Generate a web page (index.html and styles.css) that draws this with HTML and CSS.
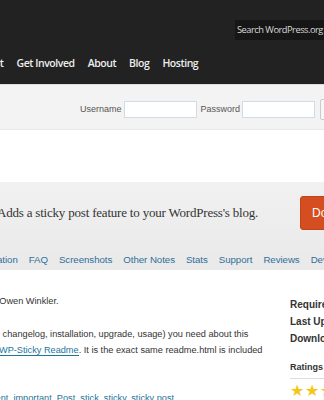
FILE: index.html
```html
<!DOCTYPE html>
<html lang="en">
<head>
    <meta charset="UTF-8">
    <meta name="viewport" content="width=device-width, initial-scale=1.0">
    <title>WP-Sticky - WordPress Plugins</title>
    <link rel="stylesheet" href="styles.css">
</head>
<body>
    <div class="header">
        <div class="search-row">
            <div class="search">Search WordPress.org</div>
        </div>
        <div class="nav-row">
            <div class="nav">
                <a href="#">Support</a>
                <a href="#">Get Involved</a>
                <a href="#">About</a>
                <a href="#">Blog</a>
                <a href="#">Hosting</a>
            </div>
            <div class="nav-button"></div>
        </div>
    </div>

    <div class="login">
        <label>Username</label>
        <input type="text" class="field">
        <label>Password</label>
        <input type="password" class="field">
        <div class="login-button"></div>
    </div>

    <div class="spacer"></div>

    <div class="plugin-head">
        <div class="tagline-row">
            <p class="tagline">Adds a sticky post feature to your WordPress's blog.</p>
            <div class="download">Download</div>
        </div>
        <div class="tabs">
            <a href="#">Installation</a>
            <a href="#">FAQ</a>
            <a href="#">Screenshots</a>
            <a href="#">Other Notes</a>
            <a href="#">Stats</a>
            <a href="#">Support</a>
            <a href="#">Reviews</a>
            <a href="#">Developers</a>
        </div>
    </div>

    <div class="main">
        <div class="content">
            <p class="line first">Based on the original Sticky plugin by Owen Winkler.</p>
            <p class="line gap">(description, changelog, installation, upgrade, usage) you need about this</p>
            <p class="line shift">plugin is in <a href="#" class="readme">WP-Sticky Readme</a>. It is the exact same readme.html is included</p>
            <p class="line tags">Tags: <a href="#">announcement</a>, <a href="#">important</a>, <a href="#">Post</a>, <a href="#">stick</a>, <a href="#">sticky</a>, <a href="#">sticky post</a></p>
        </div>
        <div class="sidebar">
            <p class="meta">Requires: 2.8 or higher</p>
            <p class="meta">Last Updated: 2010-1-18</p>
            <p class="meta">Downloads: 118,425</p>
            <h4 class="ratings">Ratings</h4>
            <div class="stars">
                <span>&#9733;</span><span>&#9733;</span><span>&#9733;</span><span>&#9733;</span><span>&#9733;</span>
            </div>
        </div>
    </div>
</body>
</html>
```

FILE: styles.css
```css
body {
    margin: 0;
    font-family: Arial, "Liberation Sans", sans-serif;
    background: #fff;
    overflow: hidden;
    width: 324px;
    height: 400px;
}
a {
    text-decoration: none;
}
p {
    margin: 0;
}
.header {
    height: 84px;
    background: #222;
    border-bottom: 1px solid #dcdcdc;
    overflow: hidden;
}
.search-row {
    display: flex;
    padding: 20px 0 0 235px;
}
.search {
    flex: none;
    width: 110px;
    height: 20px;
    background: #161616;
    color: #d8d8d8;
    font-family: "Open Sans", sans-serif;
    font-size: 9.3px;
    letter-spacing: -0.5px;
    line-height: 20px;
    padding-left: 2px;
    white-space: nowrap;
}
.nav-row {
    display: flex;
    align-items: center;
    margin-top: 11px;
    height: 24px;
}
.nav {
    display: flex;
    gap: 13px;
    margin-left: -34px;
    width: 349px;
    flex: none;
}
.nav a {
    color: #eee;
    font-family: "Open Sans", sans-serif;
    font-weight: 600;
    font-size: 10.5px;
    letter-spacing: -0.45px;
    white-space: nowrap;
}
.nav-button {
    flex: none;
    width: 20px;
    height: 26px;
    margin-left: 10px;
    background: #2a8ac4;
    border-radius: 3px;
}
.login {
    display: flex;
    align-items: center;
    height: 45px;
    box-sizing: border-box;
    padding: 4px 0 0 80px;
    background: #f3f3f3;
    border-bottom: 1px solid #e9e9e9;
    white-space: nowrap;
}
.login label {
    font-size: 9px;
    color: #555;
    margin-right: 2px;
}
.field {
    flex: none;
    width: 73px;
    height: 17px;
    box-sizing: border-box;
    border: 1px solid #cfdbe6;
    background: #fff;
    margin: 0 4px 0 0;
    padding: 0;
}
.login-button {
    flex: none;
    width: 20px;
    height: 19px;
    margin-left: 1px;
    border: 1px solid #ccc;
    border-radius: 2px;
    background: #f7f7f7;
}
.spacer {
    height: 52px;
}
.plugin-head {
    height: 88px;
    background: linear-gradient(#f1f1f1, #e9e9e9);
    overflow: hidden;
}
.tagline-row {
    display: flex;
    align-items: center;
    height: 62px;
}
.tagline {
    flex: none;
    width: 303px;
    margin-left: -3px;
    font-family: "Liberation Serif", serif;
    font-size: 13px;
    letter-spacing: -0.2px;
    color: #333;
    white-space: nowrap;
}
.download {
    flex: none;
    width: 80px;
    height: 34px;
    box-sizing: border-box;
    background: #d54e21;
    border: 1px solid #c04418;
    border-radius: 3px;
    color: #fff;
    font-size: 12px;
    line-height: 32px;
    padding-left: 11px;
}
.tabs {
    display: flex;
    gap: 11px;
    margin: 6px 0 0 -28px;
    white-space: nowrap;
}
.tabs a {
    color: #2e6f99;
    font-size: 9.7px;
    letter-spacing: -0.05px;
    line-height: 20px;
}
.main {
    display: flex;
}
.content {
    flex: none;
    width: 290px;
    overflow: hidden;
    font-size: 9.2px;
    color: #333;
    white-space: nowrap;
}
.line.first {
    margin: 26px 0 0 -156px;
}
.line.gap {
    margin: 23px 0 0 -50px;
}
.line.shift {
    margin: 6px 0 0 -47px;
}
.readme {
    color: #21759b;
    border-bottom: 1px solid #21759b;
}
.line.tags {
    margin: 38px 0 0 -77px;
}
.tags a {
    color: #21759b;
}
.sidebar {
    flex: none;
    width: 120px;
    padding-top: 26px;
    white-space: nowrap;
}
.meta {
    font-size: 10px;
    font-weight: bold;
    color: #333;
    line-height: 17px;
}
.ratings {
    margin: 15px 0 0;
    padding-bottom: 6px;
    border-bottom: 1px solid #ddd;
    font-size: 9px;
    color: #333;
}
.stars {
    display: flex;
    gap: 1px;
    margin-top: 4px;
}
.stars span {
    color: #f5c518;
    font-size: 16px;
    line-height: 16px;
}
```
